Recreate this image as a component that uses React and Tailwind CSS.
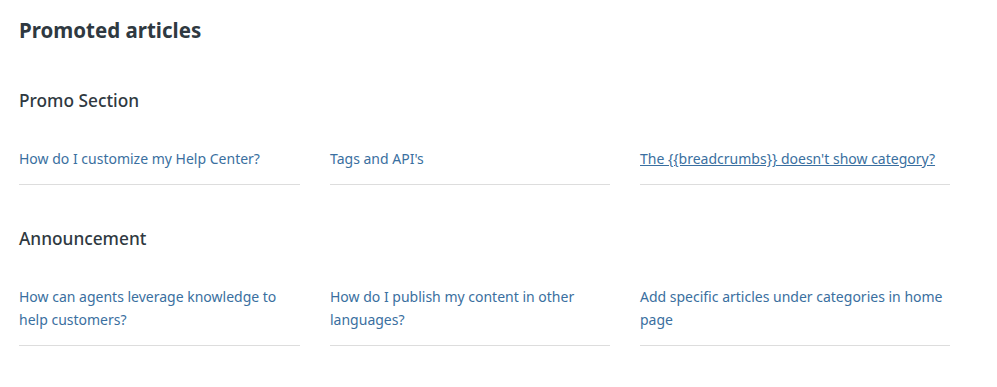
const sections = [
  {
    title: 'Promo Section',
    articles: [
      { label: 'How do I customize my Help Center?' },
      { label: "Tags and API's" },
      { label: "The {{breadcrumbs}} doesn't show category?", hover: true },
    ],
  },
  {
    title: 'Announcement',
    articles: [
      { label: 'How can agents leverage knowledge to help customers?' },
      { label: 'How do I publish my content in other languages?' },
      { label: 'Add specific articles under categories in home page' },
    ],
  },
];

const widths = ['w-[281px]', 'w-[280px]', 'w-[310px]'];

export default function App() {
  return (
    <div className="min-h-screen bg-white px-[19px] pt-[17px] font-['Noto_Sans',sans-serif] text-[#2f3941]">
      <h2 className="text-[20.5px] font-bold leading-[26px]">Promoted articles</h2>
      {sections.map((section, s) => (
        <section key={section.title} className={s === 0 ? 'mt-[46px]' : 'mt-[42px]'}>
          <h3 className="text-[17.3px] font-medium leading-[24px]">{section.title}</h3>
          <ul className="mt-[34px] flex gap-[30px]">
            {section.articles.map((a, i) => (
              <li key={a.label} className={`border-b border-[#dddddd] pb-[14px] ${widths[i]}`}>
                <a
                  href="#"
                  className={`block text-[14px] leading-[23px] text-[#3a6fa0] ${a.hover ? 'underline' : ''}`}
                >
                  {a.label}
                </a>
              </li>
            ))}
          </ul>
        </section>
      ))}
    </div>
  );
}
